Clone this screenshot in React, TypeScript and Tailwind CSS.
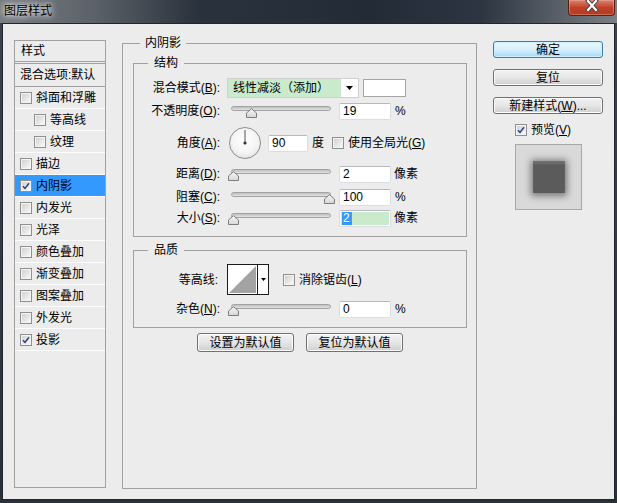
import React from "react";

const Acc = ({ c }: { c: string }) => (
  <span className="underline decoration-1 underline-offset-[1px]">{c}</span>
);

function Check({ checked }: { checked?: boolean }) {
  return (
    <span className="flex w-[12px] h-[12px] shrink-0 border border-[#8e8f8f] bg-[#f4f4f4] p-[1px]">
      <span className="relative flex-1 bg-gradient-to-br from-[#d2d2d2] to-[#f7f7f7]">
        {checked && (
          <svg viewBox="0 0 8 8" className="absolute inset-0 w-full h-full">
            <path d="M1 4.2 L3 6.4 L7 1.2" fill="none" stroke="#2b3f86" strokeWidth="1.5" />
          </svg>
        )}
      </span>
    </span>
  );
}

function Input({ v, w = 52 }: { v: string; w?: number }) {
  return (
    <div
      className="h-[17px] bg-white border border-[#dadde2] border-t-[#b7b9be] rounded-[2px] flex items-center pl-[3px] text-[12px] leading-[14px]"
      style={{ width: w }}
    >
      {v}
    </div>
  );
}

function Thumb() {
  return (
    <svg width="11" height="10" viewBox="0 0 11 10" className="block">
      <defs>
        <linearGradient id="tg" x1="0" y1="0" x2="0" y2="1">
          <stop offset="0" stopColor="#f6f6f6" />
          <stop offset="1" stopColor="#d6d6d6" />
        </linearGradient>
      </defs>
      <path d="M0.5 9.5 L0.5 5 L5.5 0.7 L10.5 5 L10.5 9.5 Z" fill="url(#tg)" stroke="#7d7d7d" strokeWidth="1" />
    </svg>
  );
}

function Slider({ v }: { v: number }) {
  return (
    <div className="relative w-[112px] h-[18px] shrink-0">
      <div className="absolute left-[4px] top-[4px] w-[100px] h-[5px] rounded-full border border-[#a3a3a3] bg-gradient-to-b from-[#bdbdbd] to-[#e4e4e4]" />
      <div className="absolute top-[6px]" style={{ left: 1 + v * 0.96 }}>
        <Thumb />
      </div>
    </div>
  );
}

function Btn({ children, w, h = 17, def }: { children: React.ReactNode; w: number; h?: number; def?: boolean }) {
  return (
    <div
      className={
        "flex items-center justify-center rounded-[3px] border text-[12px] leading-[14px] text-black " +
        (def
          ? "border-[#3c7fb1] bg-gradient-to-b from-[#eaf6fd] via-[#d9f0fc] to-[#a7d9f5] shadow-[inset_0_0_0_1px_#c9f0ff]"
          : "border-[#707070] bg-gradient-to-b from-[#f2f2f2] via-[#e6e6e6] to-[#cfcfcf] shadow-[inset_0_0_0_1px_#fcfcfc]")
      }
      style={{ width: w, height: h }}
    >
      {children}
    </div>
  );
}

const listItems: { label: string; indent?: boolean; checked?: boolean; sel?: boolean }[] = [
  { label: "斜面和浮雕" },
  { label: "等高线", indent: true },
  { label: "纹理", indent: true },
  { label: "描边" },
  { label: "内阴影", checked: true, sel: true },
  { label: "内发光" },
  { label: "光泽" },
  { label: "颜色叠加" },
  { label: "渐变叠加" },
  { label: "图案叠加" },
  { label: "外发光" },
  { label: "投影", checked: true },
];

function Label({ children }: { children: React.ReactNode }) {
  return <div className="w-[87px] shrink-0 text-right pr-[1px] whitespace-nowrap">{children}</div>;
}

export default function App() {
  return (
    <div className="w-[617px] h-[503px] flex flex-col bg-gradient-to-b from-[#3b434c] to-[#2a3038] overflow-hidden font-['Liberation_Sans','Noto_Sans_CJK_SC',sans-serif] text-[12px] leading-[16px] text-black">
      {/* title bar */}
      <div className="h-[23px] shrink-0 flex items-start justify-between bg-[linear-gradient(to_right,#787d83_0%,#5c6269_15%,#2a323d_32%,#222b36_60%,#2c3541_78%,#7b8086_100%)]">
        <div className="pl-[4px] pt-[4px] text-[12px] leading-[14px] text-black [text-shadow:0_0_5px_#ffffff,0_0_8px_#ffffff]">
          图层样式
        </div>
        <div className="mr-[2px] w-[47px] h-[16px] rounded-b-[4px] border border-t-0 border-[#5b1f14] bg-gradient-to-b from-[#d9826f] via-[#c0412a] to-[#b23a1f] flex justify-center shadow-[inset_0_0_0_1px_rgba(255,200,180,0.35)]">
          <svg width="14" height="11" viewBox="0 0 14 11">
            <path d="M3 1 L11 10 M11 1 L3 10" stroke="#3a3a3a" strokeWidth="4" strokeLinecap="square" />
            <path d="M3 1 L11 10 M11 1 L3 10" stroke="#ffffff" strokeWidth="2.2" strokeLinecap="square" />
          </svg>
        </div>
      </div>

      {/* client area */}
      <div className="flex-1 ml-[2px] mr-[2px] mb-[3px] border border-[#1f262d] bg-[#ececec] flex items-start">
        {/* left list */}
        <div className="ml-[11px] mt-[16px] w-[92px] h-[448px] border border-[#a0a0a0] flex flex-col shrink-0">
          <div className="h-[21px] border-b border-[#a0a0a0] pl-[6px] leading-[20px]">样式</div>
          <div className="h-[2px] border-b border-[#a0a0a0]" />
          <div className="h-[23px] border-b border-[#a0a0a0] pl-[5px] leading-[22px] whitespace-nowrap">混合选项:默认</div>
          {listItems.map((it) => (
            <div
              key={it.label}
              className={
                "h-[22px] border-b border-white flex items-center gap-[4px] " +
                (it.indent ? "pl-[19px] " : "pl-[5px] ") +
                (it.sel ? "bg-[#3399ff]" : "")
              }
            >
              <Check checked={it.checked} />
              <span className="leading-[16px]">{it.label}</span>
            </div>
          ))}
        </div>

        {/* middle */}
        <fieldset className="ml-[16px] mt-[11px] w-[355px] h-[454px] border border-[#a0a0a0] pl-[10px] shrink-0">
          <legend className="ml-[7px] px-[5px] leading-[16px]">内阴影</legend>

          <fieldset className="mt-[4px] w-[334px] border border-[#a0a0a0] pt-[7px] pb-[9px]">
            <legend className="ml-[14px] px-[6px] leading-[16px]">结构</legend>
            {/* blend mode */}
            <div className="h-[20px] flex items-center">
              <Label>
                混合模式(<Acc c="B" />):
              </Label>
              <div className="ml-[6px] w-[132px] h-[20px] flex border border-[#d0d0d0] bg-white">
                <div className="w-[113px] bg-[#c9ebcc] pl-[5px] leading-[18px] whitespace-nowrap">线性减淡（添加）</div>
                <div className="flex-1 flex items-center justify-center">
                  <svg width="7" height="4" viewBox="0 0 7 4">
                    <path d="M0 0 H7 L3.5 4 Z" fill="#000" />
                  </svg>
                </div>
              </div>
              <div className="ml-[4px] w-[43px] h-[18px] border border-[#a5a5a5] bg-white" />
            </div>
            {/* opacity */}
            <div className="mt-[4px] h-[18px] flex items-center">
              <Label>
                不透明度(<Acc c="O" />):
              </Label>
              <div className="ml-[6px]">
                <Slider v={19} />
              </div>
              <Input v="19" />
              <span className="ml-[4px]">%</span>
            </div>
            {/* angle */}
            <div className="mt-[7px] h-[32px] flex items-center">
              <Label>
                角度(<Acc c="A" />):
              </Label>
              <div className="ml-[8px] w-[32px] h-[32px] rounded-full border border-[#8c8c8c] bg-[radial-gradient(circle_at_50%_40%,#ffffff_0%,#f4f4f4_55%,#d8d8d8_100%)] flex justify-center shrink-0">
                <svg width="32" height="32" viewBox="0 0 32 32" className="-m-[1px]">
                  <line x1="16" y1="16" x2="16" y2="3" stroke="#555" strokeWidth="1" />
                  <circle cx="16" cy="16" r="1.6" fill="#333" />
                </svg>
              </div>
              <div className="ml-[7px]">
                <Input v="90" w={40} />
              </div>
              <span className="ml-[4px]">度</span>
              <div className="ml-[8px]">
                <Check />
              </div>
              <span className="ml-[4px] whitespace-nowrap">
                使用全局光(<Acc c="G" />)
              </span>
            </div>
            {/* distance */}
            <div className="mt-[6px] h-[18px] flex items-center">
              <Label>
                距离(<Acc c="D" />):
              </Label>
              <div className="ml-[6px]">
                <Slider v={0} />
              </div>
              <Input v="2" />
              <span className="ml-[3px]">像素</span>
            </div>
            {/* choke */}
            <div className="mt-[5px] h-[18px] flex items-center">
              <Label>
                阻塞(<Acc c="C" />):
              </Label>
              <div className="ml-[6px]">
                <Slider v={100} />
              </div>
              <Input v="100" />
              <span className="ml-[4px]">%</span>
            </div>
            {/* size */}
            <div className="mt-[3px] h-[18px] flex items-center">
              <Label>
                大小(<Acc c="S" />):
              </Label>
              <div className="ml-[6px]">
                <Slider v={0} />
              </div>
              <div className="w-[52px] h-[17px] bg-white border border-[#dadde2] border-t-[#b7b9be] rounded-[2px] p-[1px] flex">
                <div className="flex-1 bg-[#c9ebcc] flex items-center pl-[1px]">
                  <span className="bg-[#3399ff] text-white leading-[13px] px-[1px] border-r border-[#e07b00]">2</span>
                </div>
              </div>
              <span className="ml-[3px]">像素</span>
            </div>
          </fieldset>

          {/* quality */}
          <fieldset className="mt-[5px] w-[334px] border border-[#a0a0a0] pt-[6px] pb-[9px]">
            <legend className="ml-[14px] px-[6px] leading-[16px]">品质</legend>
            <div className="h-[31px] flex items-center">
              <Label>
                <span className="pr-[2px]">等高线:</span>
              </Label>
              <div className="ml-[6px] w-[42px] h-[31px] border border-[#1a1a1a] flex bg-white shrink-0">
                <svg width="29" height="29" viewBox="0 0 29 29" className="block border-r border-[#1a1a1a] w-[30px] h-[29px]">
                  <path d="M1 28 L28 1 L28 28 Z" fill="#a3a3a3" />
                </svg>
                <div className="flex-1 flex items-center justify-center">
                  <svg width="5" height="3" viewBox="0 0 5 3">
                    <path d="M0 0 H5 L2.5 3 Z" fill="#000" />
                  </svg>
                </div>
              </div>
              <div className="ml-[14px]">
                <Check />
              </div>
              <span className="ml-[4px] whitespace-nowrap">
                消除锯齿(<Acc c="L" />)
              </span>
            </div>
            <div className="mt-[5px] h-[18px] flex items-center">
              <Label>
                杂色(<Acc c="N" />):
              </Label>
              <div className="ml-[6px]">
                <Slider v={0} />
              </div>
              <Input v="0" />
              <span className="ml-[4px]">%</span>
            </div>
          </fieldset>

          <div className="mt-[5px] w-[334px] flex justify-center gap-[12px]">
            <Btn w={97} h={19}>设置为默认值</Btn>
            <Btn w={97} h={19}>复位为默认值</Btn>
          </div>
        </fieldset>

        {/* right column */}
        <div className="ml-[16px] mt-[17px] w-[110px] flex flex-col shrink-0">
          <Btn w={110} def>
            确定
          </Btn>
          <div className="mt-[11px]">
            <Btn w={110}>复位</Btn>
          </div>
          <div className="mt-[11px]">
            <Btn w={110}>
              新建样式(<Acc c="W" />)...
            </Btn>
          </div>
          <div className="mt-[10px] ml-[22px] h-[12px] flex items-center gap-[4px]">
            <Check checked />
            <span className="whitespace-nowrap">
              预览(<Acc c="V" />)
            </span>
          </div>
          <div className="mt-[8px] ml-[22px] w-[67px] h-[66px] border border-[#a8a8a8] bg-[#d9d9d9] flex items-center justify-center">
            <div className="w-[32px] h-[32px] bg-[#5b5b5b] shadow-[0_1px_7px_2px_rgba(0,0,0,0.45),inset_0_3px_2px_rgba(255,255,255,0.12)]" />
          </div>
        </div>
      </div>
    </div>
  );
}
